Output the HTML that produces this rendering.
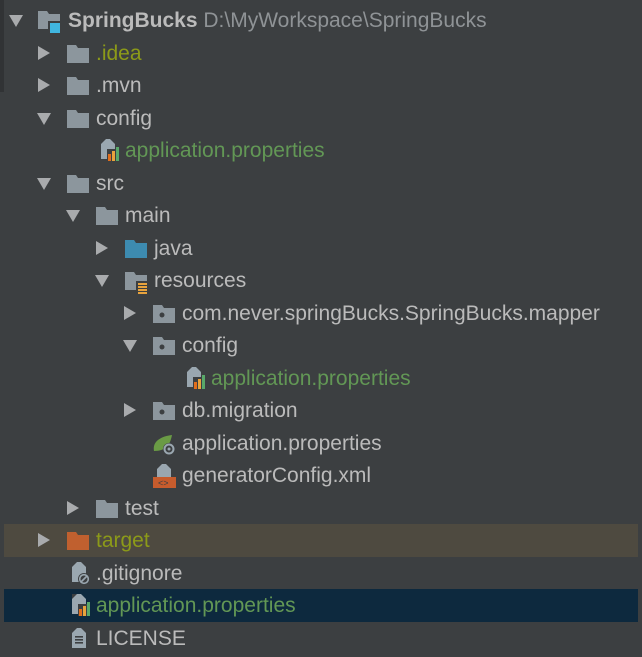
<!DOCTYPE html>
<html><head><meta charset="utf-8"><style>
body{margin:0;width:642px;height:657px;background:#3c3f41;overflow:hidden;position:relative;font-family:"Liberation Sans","DejaVu Sans",sans-serif;font-size:21px;color:#bbbbbb}
.r{position:absolute;left:0;width:642px;height:33px;line-height:33px}
.t{position:absolute;top:0;white-space:nowrap}
.a{position:absolute;top:11px;width:0;height:0}
.a.c{border-top:7px solid transparent;border-bottom:7px solid transparent;border-left:12px solid #a9abad;top:9px}
.a.o{border-left:7px solid transparent;border-right:7px solid transparent;border-top:12px solid #a9abad;top:11px}
.i{position:absolute;top:7px}
.g{color:#629755}.y{color:#8c9a19}
</style></head><body>
<div style="position:absolute;left:0;top:0;width:4px;height:92px;background:#313335"></div>
<div style="position:absolute;left:4px;top:524px;width:634px;height:33px;background:#4e4a40"></div>
<div style="position:absolute;left:4px;top:589px;width:634px;height:33px;background:#0d293e"></div>

<svg width="0" height="0" style="position:absolute"><defs>
<g id="fold"><path d="M0 1h9l2 3h11v15H0z" fill="#8c969d"/></g>
<g id="prop"><path d="M2 0h9l5 5v15H2z" fill="#9aa7b0"/><path d="M2 0h5l-5 5z" fill="#3c3f41"/><rect x="8" y="10" width="11" height="12" fill="#3c3f41"/><rect x="9" y="15" width="3" height="7" fill="#e06e1c"/><rect x="13" y="12" width="3" height="10" fill="#e8a33d"/><rect x="17" y="8" width="3" height="14" fill="#59a869"/></g>
</defs></svg>

<div class="r" style="top:4px"><div class="a o" style="left:9px"></div>
<svg class="i" style="left:38px;top:6px" width="26" height="26"><path d="M0 1h9l2 3h11v15H0z" fill="#8c969d"/><rect x="10" y="11" width="13" height="13" fill="#3c3f41"/><rect x="12" y="13" width="10" height="10" fill="#40b6e0"/></svg>
<div class="t" style="left:68px"><b>SpringBucks</b> <span style="color:#8f9396">D:\MyWorkspace\SpringBucks</span></div></div>
<div class="r" style="top:37px"><div class="a c" style="left:38px"></div><svg class="i" style="left:67px" width="24" height="20"><use href="#fold"/></svg><div class="t y" style="left:96px">.idea</div></div>
<div class="r" style="top:69px"><div class="a c" style="left:38px"></div><svg class="i" style="left:67px" width="24" height="20"><use href="#fold"/></svg><div class="t" style="left:96px">.mvn</div></div>
<div class="r" style="top:102px"><div class="a o" style="left:37px"></div><svg class="i" style="left:67px" width="24" height="20"><use href="#fold"/></svg><div class="t" style="left:96px">config</div></div>
<div class="r" style="top:134px"><svg class="i" style="left:99px;top:5px" width="22" height="24"><use href="#prop"/></svg><div class="t g" style="left:125px">application.properties</div></div>
<div class="r" style="top:167px"><div class="a o" style="left:37px"></div><svg class="i" style="left:67px" width="24" height="20"><use href="#fold"/></svg><div class="t" style="left:96px">src</div></div>
<div class="r" style="top:199px"><div class="a o" style="left:66px"></div><svg class="i" style="left:96px" width="24" height="20"><use href="#fold"/></svg><div class="t" style="left:125px">main</div></div>
<div class="r" style="top:232px"><div class="a c" style="left:96px"></div><svg class="i" style="left:125px" width="24" height="20"><path d="M0 1h9l2 3h11v15H0z" fill="#3d8bb0"/></svg><div class="t" style="left:154px">java</div></div>
<div class="r" style="top:264px"><div class="a o" style="left:95px"></div><svg class="i" style="left:125px" width="26" height="26"><path d="M0 1h9l2 3h11v15H0z" fill="#8c969d"/><rect x="11" y="10" width="13" height="15" fill="#3c3f41"/><rect x="13" y="12" width="9" height="2" fill="#e8a33d"/><rect x="13" y="15" width="9" height="2" fill="#e8a33d"/><rect x="13" y="18" width="9" height="2" fill="#e8a33d"/><rect x="13" y="21" width="9" height="2" fill="#e8a33d"/></svg><div class="t" style="left:154px">resources</div></div>
<div class="r" style="top:297px"><div class="a c" style="left:124px"></div><svg class="i" style="left:153px" width="24" height="20"><use href="#fold"/><circle cx="9" cy="11" r="2.5" fill="#3c3f41"/></svg><div class="t" style="left:182px">com.never.springBucks.SpringBucks.mapper</div></div>
<div class="r" style="top:329px"><div class="a o" style="left:123px"></div><svg class="i" style="left:153px" width="24" height="20"><use href="#fold"/><circle cx="9" cy="11" r="2.5" fill="#3c3f41"/></svg><div class="t" style="left:182px">config</div></div>
<div class="r" style="top:362px"><svg class="i" style="left:185px;top:5px" width="22" height="24"><use href="#prop"/></svg><div class="t g" style="left:211px">application.properties</div></div>
<div class="r" style="top:394px"><div class="a c" style="left:124px"></div><svg class="i" style="left:153px" width="24" height="20"><use href="#fold"/><circle cx="9" cy="11" r="2.5" fill="#3c3f41"/></svg><div class="t" style="left:182px">db.migration</div></div>
<div class="r" style="top:427px"><svg class="i" style="left:152px;top:6px" width="26" height="24"><path d="M2 18C0 8 10 3 20 2 18 12 14 18 2 18z" fill="#6a9b45"/><circle cx="17" cy="16" r="6" fill="#3c3f41"/><circle cx="17" cy="16" r="4.5" fill="none" stroke="#9aa7b0" stroke-width="2"/><circle cx="17" cy="16" r="1.5" fill="#9aa7b0"/></svg><div class="t" style="left:182px">application.properties</div></div>
<div class="r" style="top:459px"><svg class="i" style="left:153px;top:5px" width="24" height="24"><path d="M4 0h9l5 5v10H4z" fill="#9aa7b0"/><path d="M4 0h5l-5 5z" fill="#3c3f41"/><rect x="0" y="13" width="23" height="11" fill="#c75c2d"/><text x="5" y="22" font-size="9" fill="#3c3f41" font-family="Liberation Sans">&lt;&gt;</text></svg><div class="t" style="left:182px">generatorConfig.xml</div></div>
<div class="r" style="top:492px"><div class="a c" style="left:67px"></div><svg class="i" style="left:96px" width="24" height="20"><use href="#fold"/></svg><div class="t" style="left:125px">test</div></div>
<div class="r" style="top:524px"><div class="a c" style="left:38px"></div><svg class="i" style="left:67px" width="24" height="20"><path d="M0 1h9l2 3h11v15H0z" fill="#c0602f"/></svg><div class="t y" style="left:96px">target</div></div>
<div class="r" style="top:557px"><svg class="i" style="left:70px;top:5px" width="22" height="24"><path d="M2 0h9l5 5v15H2z" fill="#9aa7b0"/><path d="M2 0h5l-5 5z" fill="#3c3f41"/><circle cx="14" cy="17" r="6" fill="#3c3f41"/><circle cx="14" cy="17" r="4.3" fill="none" stroke="#9aa7b0" stroke-width="1.6"/><path d="M11 20l6-6" stroke="#9aa7b0" stroke-width="1.6"/></svg><div class="t" style="left:96px">.gitignore</div></div>
<div class="r" style="top:589px"><svg class="i" style="left:70px;top:5px" width="22" height="24"><use href="#prop"/></svg><div class="t g" style="left:96px">application.properties</div></div>
<div class="r" style="top:622px"><svg class="i" style="left:70px;top:6px" width="20" height="22"><path d="M2 0h9l5 5v15H2z" fill="#9aa7b0"/><path d="M2 0h5l-5 5z" fill="#3c3f41"/><rect x="5" y="8" width="8" height="1.6" fill="#3c3f41"/><rect x="5" y="11" width="8" height="1.6" fill="#3c3f41"/><rect x="5" y="14" width="8" height="1.6" fill="#3c3f41"/></svg><div class="t" style="left:96px">LICENSE</div></div>
</body></html>
